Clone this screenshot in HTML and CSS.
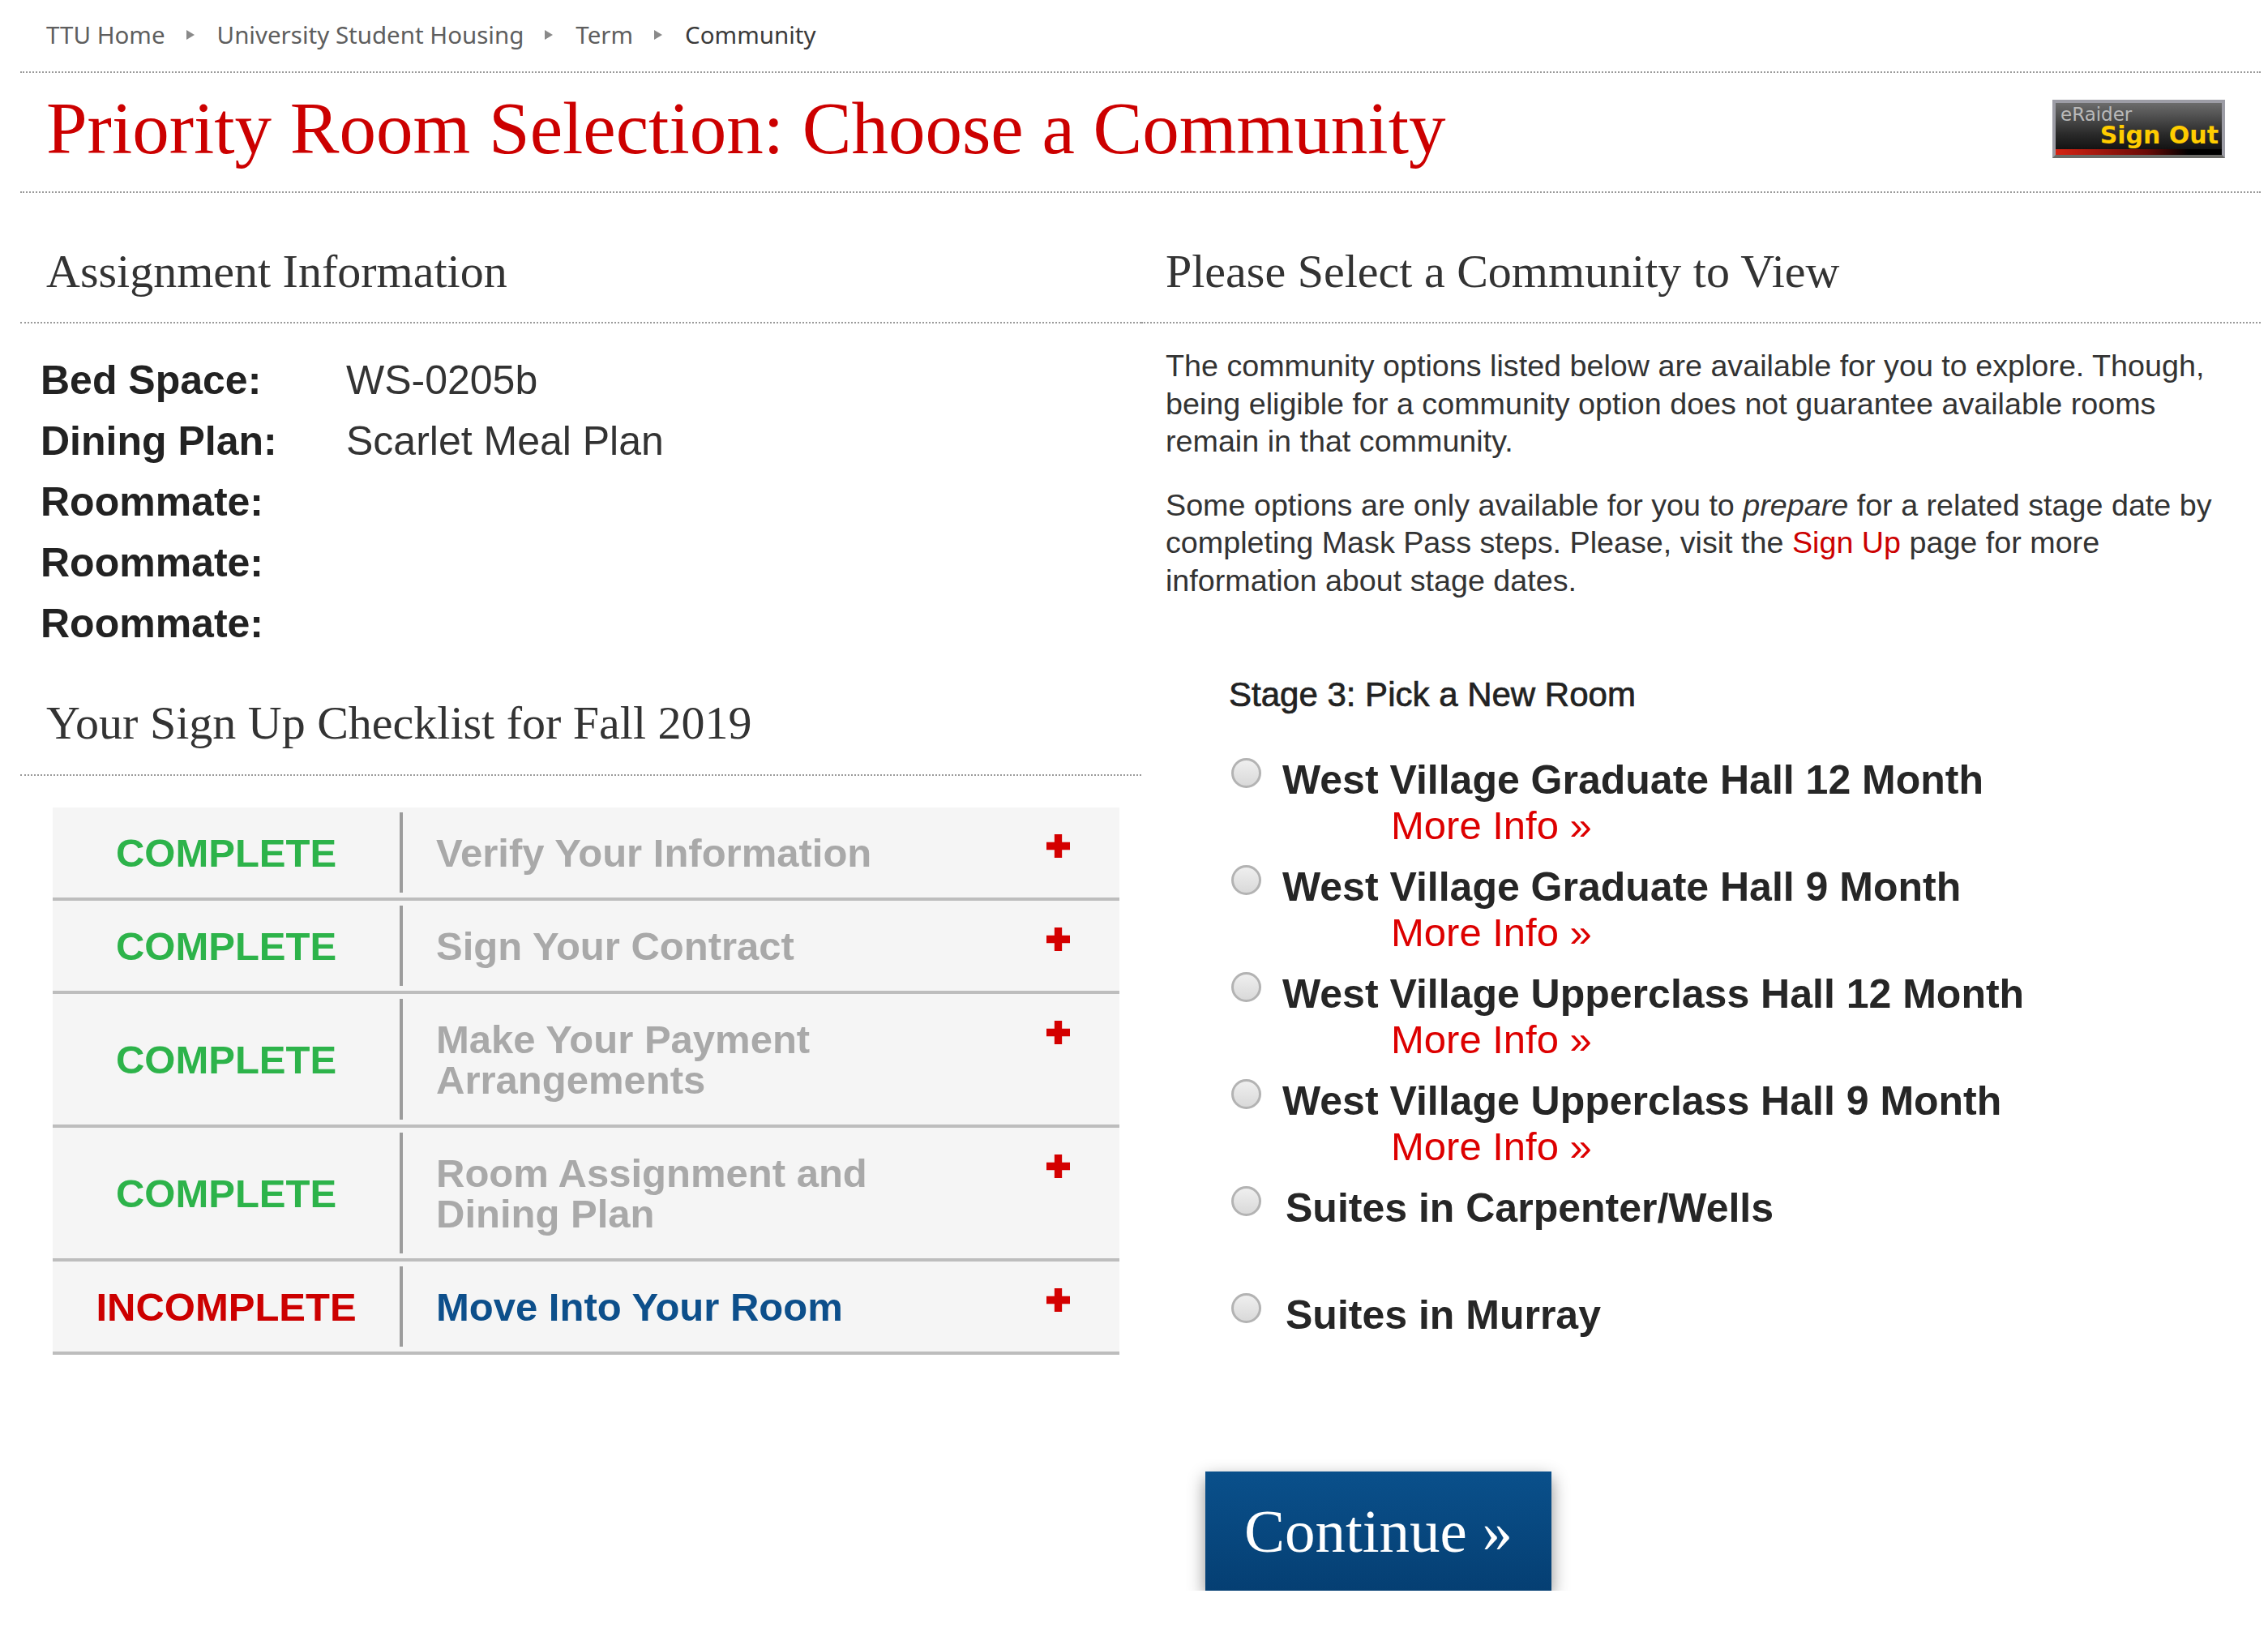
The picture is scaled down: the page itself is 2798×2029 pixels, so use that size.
FILE: index.html
```html
<!DOCTYPE html>
<html lang="en">
<head>
<meta charset="utf-8">
<title>Priority Room Selection: Choose a Community</title>
<link rel="stylesheet" href="styles.css">
</head>
<body>
<div class="page">
  <nav class="crumbs">
    <a class="crumb" href="#">TTU Home</a><span class="sep"></span>
    <a class="crumb" href="#">University Student Housing</a><span class="sep"></span>
    <a class="crumb" href="#">Term</a><span class="sep"></span>
    <span class="crumb crumb-current">Community</span>
  </nav>

  <header class="titlebar">
    <h1 class="title">Priority Room Selection: Choose a Community</h1>
    <a class="signout" href="#">
      <span class="eraider">eRaider</span>
      <span class="so-text">Sign Out</span>
      <span class="so-strip"></span>
    </a>
  </header>

  <div class="columns">
    <section class="col col-left">
      <h2 class="sec-head">Assignment Information</h2>
      <dl class="info">
        <dt>Bed Space:</dt><dd>WS-0205b</dd>
        <dt>Dining Plan:</dt><dd>Scarlet Meal Plan</dd>
        <dt>Roommate:</dt><dd></dd>
        <dt>Roommate:</dt><dd></dd>
        <dt>Roommate:</dt><dd></dd>
      </dl>

      <h2 class="sec-head sec-head-check">Your Sign Up Checklist for Fall 2019</h2>
      <div class="checklist">
        <div class="row">
          <div class="status done">COMPLETE</div>
          <div class="task"><span class="task-text">Verify Your Information</span><svg class="plus" viewBox="0 0 28 28"><path d="M9.5 0h9v9.5H28v9h-9.5V28h-9v-9.5H0v-9h9.5z"/></svg></div>
        </div>
        <div class="row">
          <div class="status done">COMPLETE</div>
          <div class="task"><span class="task-text">Sign Your Contract</span><svg class="plus" viewBox="0 0 28 28"><path d="M9.5 0h9v9.5H28v9h-9.5V28h-9v-9.5H0v-9h9.5z"/></svg></div>
        </div>
        <div class="row">
          <div class="status done">COMPLETE</div>
          <div class="task"><span class="task-text">Make Your Payment Arrangements</span><svg class="plus" viewBox="0 0 28 28"><path d="M9.5 0h9v9.5H28v9h-9.5V28h-9v-9.5H0v-9h9.5z"/></svg></div>
        </div>
        <div class="row">
          <div class="status done">COMPLETE</div>
          <div class="task"><span class="task-text">Room Assignment and Dining Plan</span><svg class="plus" viewBox="0 0 28 28"><path d="M9.5 0h9v9.5H28v9h-9.5V28h-9v-9.5H0v-9h9.5z"/></svg></div>
        </div>
        <div class="row">
          <div class="status todo">INCOMPLETE</div>
          <div class="task"><span class="task-text task-active">Move Into Your Room</span><svg class="plus" viewBox="0 0 28 28"><path d="M9.5 0h9v9.5H28v9h-9.5V28h-9v-9.5H0v-9h9.5z"/></svg></div>
        </div>
      </div>
    </section>

    <section class="col col-right">
      <h2 class="sec-head sec-head-right">Please Select a Community to View</h2>
      <p class="intro"><span class="ln">The community options listed below are available for you to explore. Though,</span><span class="ln">being eligible for a community option does not guarantee available rooms</span><span class="ln">remain in that community.</span></p>
      <p class="intro intro-2"><span class="ln"><span>Some options are only available for you to </span><em>prepare</em><span> for a related stage date by</span></span><span class="ln"><span>completing Mask Pass steps. Please, visit the </span><a class="link" href="#">Sign Up</a><span> page for more</span></span><span class="ln">information about stage dates.</span></p>

      <div class="stage">Stage 3: Pick a New Room</div>
      <ul class="options">
        <li class="option"><input class="radio" type="radio" name="c"><div class="opt-body"><span class="opt-label">West Village Graduate Hall 12 Month</span><a class="more" href="#">More Info »</a></div></li>
        <li class="option"><input class="radio" type="radio" name="c"><div class="opt-body"><span class="opt-label">West Village Graduate Hall 9 Month</span><a class="more" href="#">More Info »</a></div></li>
        <li class="option"><input class="radio" type="radio" name="c"><div class="opt-body"><span class="opt-label">West Village Upperclass Hall 12 Month</span><a class="more" href="#">More Info »</a></div></li>
        <li class="option"><input class="radio" type="radio" name="c"><div class="opt-body"><span class="opt-label">West Village Upperclass Hall 9 Month</span><a class="more" href="#">More Info »</a></div></li>
        <li class="option"><input class="radio" type="radio" name="c"><div class="opt-body"><span class="opt-label opt-suite">Suites in Carpenter/Wells</span></div></li>
        <li class="option"><input class="radio" type="radio" name="c"><div class="opt-body"><span class="opt-label opt-suite">Suites in Murray</span></div></li>
      </ul>

      <button class="continue" type="button">Continue »</button>
    </section>
  </div>
</div>
</body>
</html>
```

FILE: styles.css
```css
html, body {
  margin: 0;
  padding: 0;
  background: #ffffff;
}

.page {
  margin-left: 25px;
  width: 2764px;
  font-family: "Liberation Sans", Arial, sans-serif;
  color: #333333;
}

/* Breadcrumb */
.crumbs {
  display: flex;
  align-items: center;
  height: 40px;
  padding: 23px 0 25px 32px;
  border-bottom: 2px dotted #9a9a9a;
  font-family: "Noto Sans", "Open Sans", sans-serif;
  font-size: 29.5px;
  line-height: 40px;
}
.crumb {
  color: #5e5e5e;
  text-decoration: none;
}
.crumb-current {
  color: #3a3a3a;
}
.sep {
  display: inline-block;
  width: 0;
  height: 0;
  margin: 0 28px 0 26px;
  border-top: 6px solid transparent;
  border-bottom: 6px solid transparent;
  border-left: 10px solid #8a8a8a;
}

/* Title bar */
.titlebar {
  display: flex;
  align-items: center;
  justify-content: space-between;
  padding: 19px 44px 27px 32px;
  border-bottom: 2px dotted #9a9a9a;
}
.title {
  margin: 0;
  font-family: "Liberation Serif", "Times New Roman", serif;
  font-weight: 400;
  font-size: 91px;
  line-height: 100px;
  color: #cc0000;
}
.signout {
  display: flex;
  flex-direction: column;
  box-sizing: border-box;
  width: 213px;
  height: 72px;
  border: 4px solid #9d9da6;
  border-bottom-color: #6a6a66;
  background: linear-gradient(#6c6c6c, #2a2a2a 60%, #0a0a0a);
  text-decoration: none;
  font-family: "DejaVu Sans", sans-serif;
}
.eraider {
  padding: 2px 0 0 6px;
  font-size: 23px;
  line-height: 24px;
  color: #b9b9b9;
}
.so-text {
  align-self: flex-end;
  padding-right: 4px;
  font-weight: 700;
  font-size: 30px;
  line-height: 28px;
  color: #ffcc00;
}
.so-strip {
  margin-top: auto;
  height: 7px;
  background: linear-gradient(90deg, #d52414, #6a0a06 55%, #000000 80%);
}

/* Columns */
.columns {
  display: flex;
  align-items: flex-start;
}
.col-left {
  width: 1383px;
}
.col-right {
  flex: 1;
}

.sec-head {
  margin: 0;
  padding: 62px 0 27px 32px;
  border-bottom: 2px dotted #9a9a9a;
  font-family: "Liberation Serif", "Times New Roman", serif;
  font-weight: 400;
  font-size: 58px;
  line-height: 70px;
  color: #333333;
}
.sec-head-right {
  padding-left: 30px;
}
.sec-head-check {
  margin-top: 50px;
  padding-top: 0;
  padding-bottom: 28px;
}

/* Assignment info */
.info {
  display: grid;
  grid-template-columns: 377px 1fr;
  margin: 33px 0 0 25px;
  font-size: 50px;
  line-height: 75px;
}
.info dt {
  font-weight: 700;
  color: #222222;
}
.info dd {
  margin: 0;
  color: #333333;
}

/* Checklist */
.checklist {
  margin: 39px 27px 0 40px;
}
.row {
  display: flex;
  padding: 6px 0;
  background: #f5f5f5;
  border-bottom: 4px solid #bdbdbd;
}
.status {
  display: flex;
  align-items: center;
  justify-content: center;
  width: 428px;
  font-weight: 700;
  font-size: 49px;
  line-height: 50px;
}
.done {
  color: #2db34a;
}
.todo {
  color: #cc0000;
}
.task {
  flex: 1;
  display: flex;
  justify-content: space-between;
  align-items: flex-start;
  padding: 25px 61px 24px 41px;
  border-left: 4px solid #9c9c9c;
}
.task-text {
  max-width: 620px;
  font-weight: 700;
  font-size: 49px;
  line-height: 50px;
  color: #a9a9a9;
}
.task-active {
  color: #0d4f8b;
}
.plus {
  flex: none;
  width: 29px;
  height: 29px;
  margin-top: 2px;
  fill: #d40000;
}

/* Right column */
.intro {
  width: 1340px;
  margin: 29px 0 0 30px;
  font-size: 37.7px;
  line-height: 46.5px;
  color: #333333;
}
.intro .ln {
  display: block;
  white-space: nowrap;
}
.intro-2 {
  margin-top: 32px;
}
.link {
  color: #cc0000;
  text-decoration: none;
}
.stage {
  margin: 93px 0 0 108px;
  font-size: 42px;
  line-height: 50px;
  color: #222222;
  -webkit-text-stroke: 0.7px #222222;
}
.options {
  list-style: none;
  margin: 52px 0 0 111px;
  padding: 0;
}
.option {
  display: flex;
  align-items: flex-start;
  height: 112px;
  margin-bottom: 20px;
}
.option:last-child {
  margin-bottom: 0;
}
.radio {
  -webkit-appearance: none;
  appearance: none;
  flex: none;
  box-sizing: border-box;
  width: 37px;
  height: 37px;
  margin: 1px 26px 0 0;
  border: 3px solid #b3b3b3;
  border-radius: 50%;
  background: linear-gradient(#efefef, #d9d9d9);
}
.opt-body {
  display: flex;
  flex-direction: column;
}
.opt-label {
  font-weight: 700;
  font-size: 50px;
  line-height: 56px;
  color: #262626;
}
.opt-suite {
  padding-left: 4px;
}
.more {
  margin-left: 134px;
  font-size: 49px;
  line-height: 56px;
  color: #dd0000;
  text-decoration: none;
}
.continue {
  display: block;
  width: 427px;
  height: 147px;
  margin: 109px 0 0 79px;
  padding: 0;
  border: 0;
  background: linear-gradient(#0a508b, #053f73);
  box-shadow: 0 8px 20px rgba(0, 0, 0, 0.45);
  font-family: "Liberation Serif", "Times New Roman", serif;
  font-size: 75px;
  color: #ffffff;
  cursor: pointer;
}
```
